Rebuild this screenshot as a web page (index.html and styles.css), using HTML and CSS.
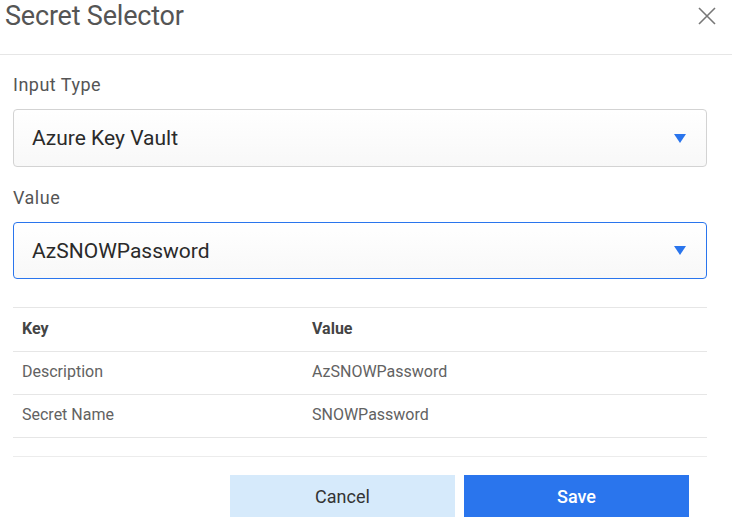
FILE: index.html
```html
<!DOCTYPE html>
<html>
<head>
<meta charset="utf-8">
<link rel="stylesheet" href="styles.css">
</head>
<body>
<div class="dialog">
  <div class="header">
    <h1 class="title">Secret Selector</h1>
    <button class="close" aria-label="Close">
      <svg width="18" height="18" viewBox="0 0 18 18"><path d="M1 1L17 17M17 1L1 17" stroke="#777" stroke-width="1.6" fill="none"/></svg>
    </button>
  </div>
  <div class="content">
    <label class="label">Input Type</label>
    <div class="select">
      <span class="select-text">Azure Key Vault</span>
      <span class="arrow"></span>
    </div>
    <label class="label label-value">Value</label>
    <div class="select select-active">
      <span class="select-text">AzSNOWPassword</span>
      <span class="arrow"></span>
    </div>
    <table class="kv">
      <thead>
        <tr><th class="col-key">Key</th><th>Value</th></tr>
      </thead>
      <tbody>
        <tr><td>Description</td><td>AzSNOWPassword</td></tr>
        <tr><td>Secret Name</td><td>SNOWPassword</td></tr>
      </tbody>
    </table>
    <div class="footer">
      <button class="btn btn-cancel">Cancel</button>
      <button class="btn btn-save">Save</button>
    </div>
  </div>
</div>
</body>
</html>
```
FILE: styles.css
```css
* { box-sizing: border-box; }
html, body { margin: 0; padding: 0; background: #fff; }
body { font-family: Roboto, "Noto Sans", sans-serif; }
.dialog { width: 732px; height: 525px; overflow: hidden; }
.header {
  height: 55px;
  border-bottom: 1px solid #e6e6e6;
  display: flex;
  justify-content: space-between;
  align-items: flex-start;
}
.title {
  margin: 0;
  padding: 0 0 0 5px;
  font-size: 27px;
  line-height: 33px;
  font-weight: 400;
  color: #555;
  letter-spacing: -0.2px;
}
.close {
  border: 0;
  background: none;
  padding: 0;
  margin: 7px 16px 0 0;
  width: 18px;
  height: 18px;
  display: flex;
}
.content { padding: 0 25px 0 13px; }
.label {
  display: block;
  margin-top: 20px;
  font-size: 18px;
  line-height: 20px;
  color: #555;
  letter-spacing: 0.5px;
}
.label-value { margin-top: 21px; }
.select {
  margin-top: 14px;
  height: 58px;
  border: 1px solid #d3d3d3;
  border-radius: 4px;
  background: linear-gradient(#fff, #f8f8f8);
  display: flex;
  align-items: center;
  justify-content: space-between;
  padding: 0 20px 0 18px;
}
.select-active { border-color: #2a75ed; height: 57px; }
.select-text { font-size: 21px; color: #2a2a2a; }
.arrow {
  width: 0; height: 0;
  border-left: 6px solid transparent;
  border-right: 6px solid transparent;
  border-top: 9px solid #2a75ed;
}
.kv {
  margin-top: 28px;
  width: 100%;
  border-collapse: collapse;
  border-top: 1px solid #e6e6e6;
  font-size: 16px;
  color: #626262;
}
.kv th, .kv td {
  height: 43px;
  padding: 0 9px 3px;
  text-align: left;
  border-bottom: 1px solid #e6e6e6;
}
.kv th { font-weight: 700; color: #444; height: 44px; }
.kv .col-key { width: 290px; }
.footer {
  margin-top: 18px;
  border-top: 1px solid #ececec;
  padding: 18px 18px 0 0;
  display: flex;
  justify-content: flex-end;
  gap: 9px;
}
.btn {
  width: 225px;
  height: 42px;
  border: 0;
  font-family: inherit;
  font-size: 18px;
  cursor: pointer;
}
.btn-cancel { background: #d6eafb; color: #333; }
.btn-save { background: #2a75ed; color: #fff; font-weight: 500; }
```
